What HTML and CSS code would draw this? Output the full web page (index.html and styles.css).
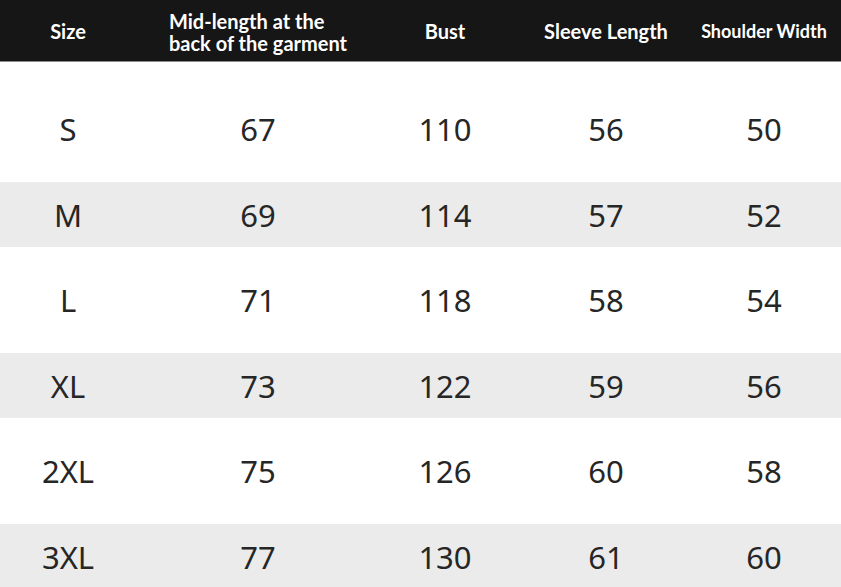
FILE: index.html
```html
<!DOCTYPE html>
<html lang="en">
<head>
<meta charset="utf-8">
<title>Size chart</title>
<link rel="stylesheet" href="styles.css">
</head>
<body>
<div class="chart">
  <div class="head row-grid">
    <div class="hcell">Size</div>
    <div class="hcell"><span class="two-line">Mid-length at the<br>back of the garment</span></div>
    <div class="hcell">Bust</div>
    <div class="hcell">Sleeve Length</div>
    <div class="hcell small">Shoulder Width</div>
  </div>
  <div class="body">
    <div class="row row-grid"><div>S</div><div>67</div><div>110</div><div>56</div><div>50</div></div>
    <div class="row row-grid alt"><div>M</div><div>69</div><div>114</div><div>57</div><div>52</div></div>
    <div class="row row-grid"><div>L</div><div>71</div><div>118</div><div>58</div><div>54</div></div>
    <div class="row row-grid alt"><div>XL</div><div>73</div><div>122</div><div>59</div><div>56</div></div>
    <div class="row row-grid"><div>2XL</div><div>75</div><div>126</div><div>60</div><div>58</div></div>
    <div class="row row-grid alt"><div>3XL</div><div>77</div><div>130</div><div>61</div><div>60</div></div>
  </div>
</div>
</body>
</html>
```

FILE: styles.css
```css
html, body {
  margin: 0;
  padding: 0;
  background: #ffffff;
}
body {
  width: 841px;
  height: 587px;
  overflow: hidden;
}
.chart {
  width: 841px;
}
.row-grid {
  display: grid;
  grid-template-columns: 136px 244px 130px 192px 124px 15px;
}
.head {
  height: 61px;
  background: #161616;
  border-bottom: 1px solid #8a8a8a;
  color: #ffffff;
  font-family: Lato, "Liberation Sans", sans-serif;
  font-weight: 700;
  font-size: 20px;
}
.hcell {
  display: flex;
  align-items: center;
  justify-content: center;
  white-space: nowrap;
}
.two-line {
  display: inline-block;
  text-align: left;
  line-height: 22px;
  padding-top: 3px;
}
.hcell.small {
  font-size: 18px;
}
.body {
  display: flex;
  flex-direction: column;
  gap: 20.5px;
  padding-top: 34.5px;
}
.row {
  height: 65px;
  align-items: center;
  font-family: "Noto Sans", "Open Sans", sans-serif;
  font-size: 31px;
  color: #262626;
}
.row > div {
  text-align: center;
}
.row.alt {
  background: #ebebeb;
}
```
